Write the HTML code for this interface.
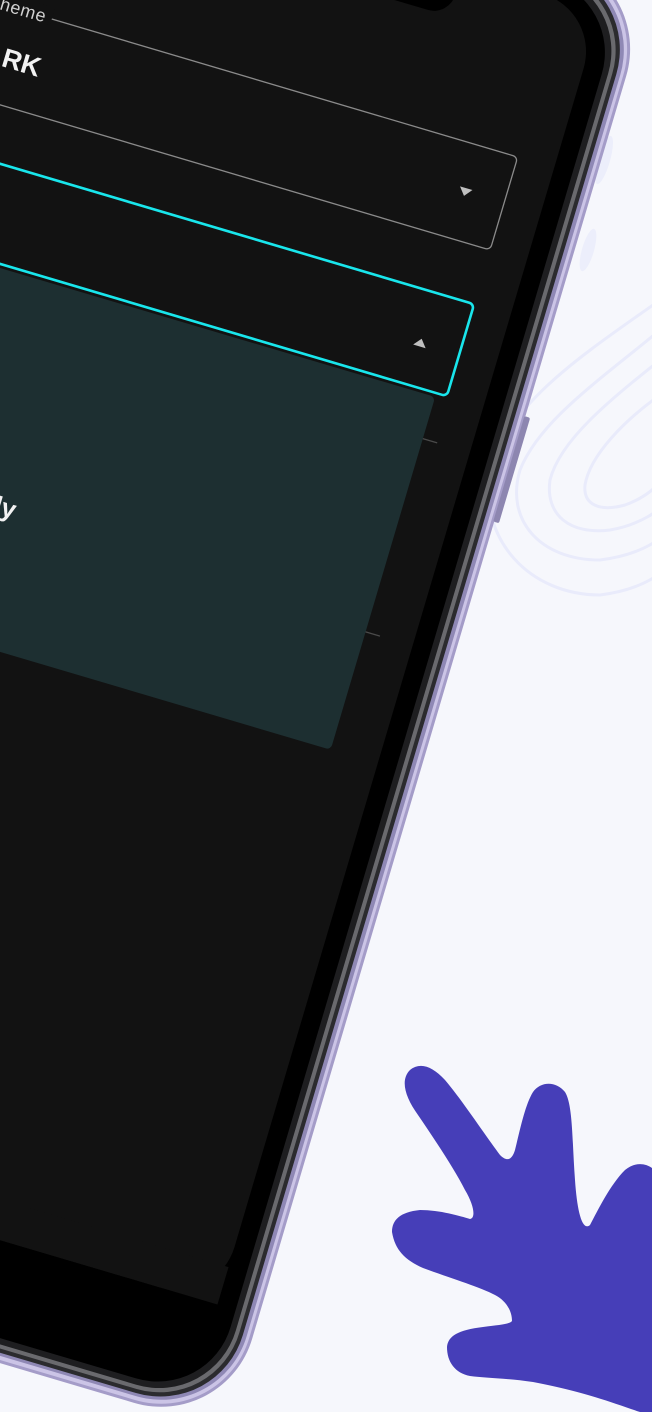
<!DOCTYPE html>
<html><head><meta charset="utf-8"><style>
html,body{margin:0;padding:0;background:#f6f7fc;}
svg{display:block}
</style></head><body>
<svg width="652" height="1412" viewBox="0 0 652 1412" xmlns="http://www.w3.org/2000/svg">
<rect width="652" height="1412" fill="#f6f7fc"/>
<g fill="none" stroke="#e9ebfb" stroke-width="3">
<path d="M660,330 C600,380 540,420 520,470 C505,520 540,560 600,560 C640,555 660,540 670,530"/>
<path d="M660,360 C610,400 560,440 550,480 C545,515 570,535 610,530 C640,525 660,510 670,500"/>
<path d="M660,395 C625,420 590,455 585,485 C583,505 600,512 625,505 C645,498 660,485 670,470"/>
<path d="M660,300 C590,350 510,400 490,470 C478,540 530,595 600,595 C640,590 660,575 670,565"/>
</g>
<ellipse cx="604" cy="160" rx="6" ry="25" fill="#eceefb" transform="rotate(16 604 160)"/>
<ellipse cx="588" cy="250" rx="6" ry="22" fill="#eceefb" transform="rotate(16 588 250)"/>
<g transform="rotate(16.5)">
  <rect x="-500" y="-200" width="1122" height="1507" rx="95" fill="#a49cc8"/>
  <rect x="-497" y="-197" width="1116" height="1501" rx="92" fill="#cbc4e6"/>
  <rect x="-493" y="-193" width="1109" height="1493" rx="89" fill="#8f88b5"/>
  <rect x="-490" y="-190" width="1102" height="1487" rx="86" fill="#2b2b2e"/>
  <rect x="-486" y="-186" width="1094" height="1479" rx="83" fill="#6a6a6e"/>
  <rect x="-482" y="-182" width="1086" height="1471" rx="80" fill="#1e1e20"/>
  <rect x="-476" y="-176" width="1074" height="1459" rx="76" fill="#000"/>
  <rect x="621" y="250" width="6" height="110" rx="2" fill="#8d86b0"/>
  <rect x="-400" y="-160" width="979" height="1349" rx="60" fill="#121212"/>
  <rect x="-400" y="1150" width="979" height="39" fill="#121212"/>
  <rect x="220" y="-200" width="215" height="88" rx="22" fill="#000"/>
  <rect x="-300" y="3.5" width="841" height="97" rx="5" fill="none" stroke="#8a8a8a" stroke-width="1.3"/>
  <rect x="-300" y="-8" width="355" height="18" fill="#121212"/>
  <text x="49" y="9" text-anchor="end" font-family="Liberation Sans, sans-serif" font-size="18" fill="#d0d0d0" letter-spacing="0.6">Theme</text>
  <text x="58" y="63" text-anchor="end" font-family="Liberation Sans, sans-serif" font-weight="bold" font-size="27" fill="#f2f2f2">DARK</text>
  <path d="M494,48 L507,48 L500.5,56 Z" fill="#bfbfbf"/>
  <line x1="-300" y1="300.5" x2="545" y2="300.5" stroke="#4a4a4a" stroke-width="1.3"/>
  <line x1="-300" y1="502" x2="545" y2="502" stroke="#4a4a4a" stroke-width="1.3"/>
  <rect x="-300" y="157" width="841" height="96" rx="5" fill="#121212" stroke="#19e6ec" stroke-width="2.6"/>
  <path d="M494,213 L507,213 L500.5,205 Z" fill="#bfbfbf"/>
  <rect x="-300" y="257" width="830" height="368" rx="5" fill="#1d2f31"/>
  <text x="160" y="494" text-anchor="end" font-family="Liberation Sans, sans-serif" font-weight="bold" font-size="26" fill="#f2f2f2">Weekly</text>
</g>
<path fill="#463eb8" d="M652,1412 L640,1412 C610,1402 585,1392 533,1382 C505,1378 485,1378 470,1376 C455,1373 447,1362 447,1347 C448,1336 458,1330 483,1327 C500,1325 510,1324 512,1321 C512,1310 505,1300 495,1295 C480,1287 450,1278 423,1268 C405,1260 395,1250 392,1232 C392,1220 400,1212 420,1210 C440,1210 460,1216 470,1219 C476,1218 474,1205 465,1190 C455,1170 435,1140 418,1115 C405,1097 400,1080 410,1070 C420,1062 432,1066 445,1080 C462,1100 485,1135 500,1155 C507,1162 512,1160 515,1150 C520,1130 525,1105 533,1092 C540,1082 555,1080 565,1092 C573,1105 572,1140 575,1180 C577,1210 582,1232 590,1225 C598,1210 610,1185 625,1170 C635,1162 645,1163 652,1168 Z"/>
</svg>
</body></html>
